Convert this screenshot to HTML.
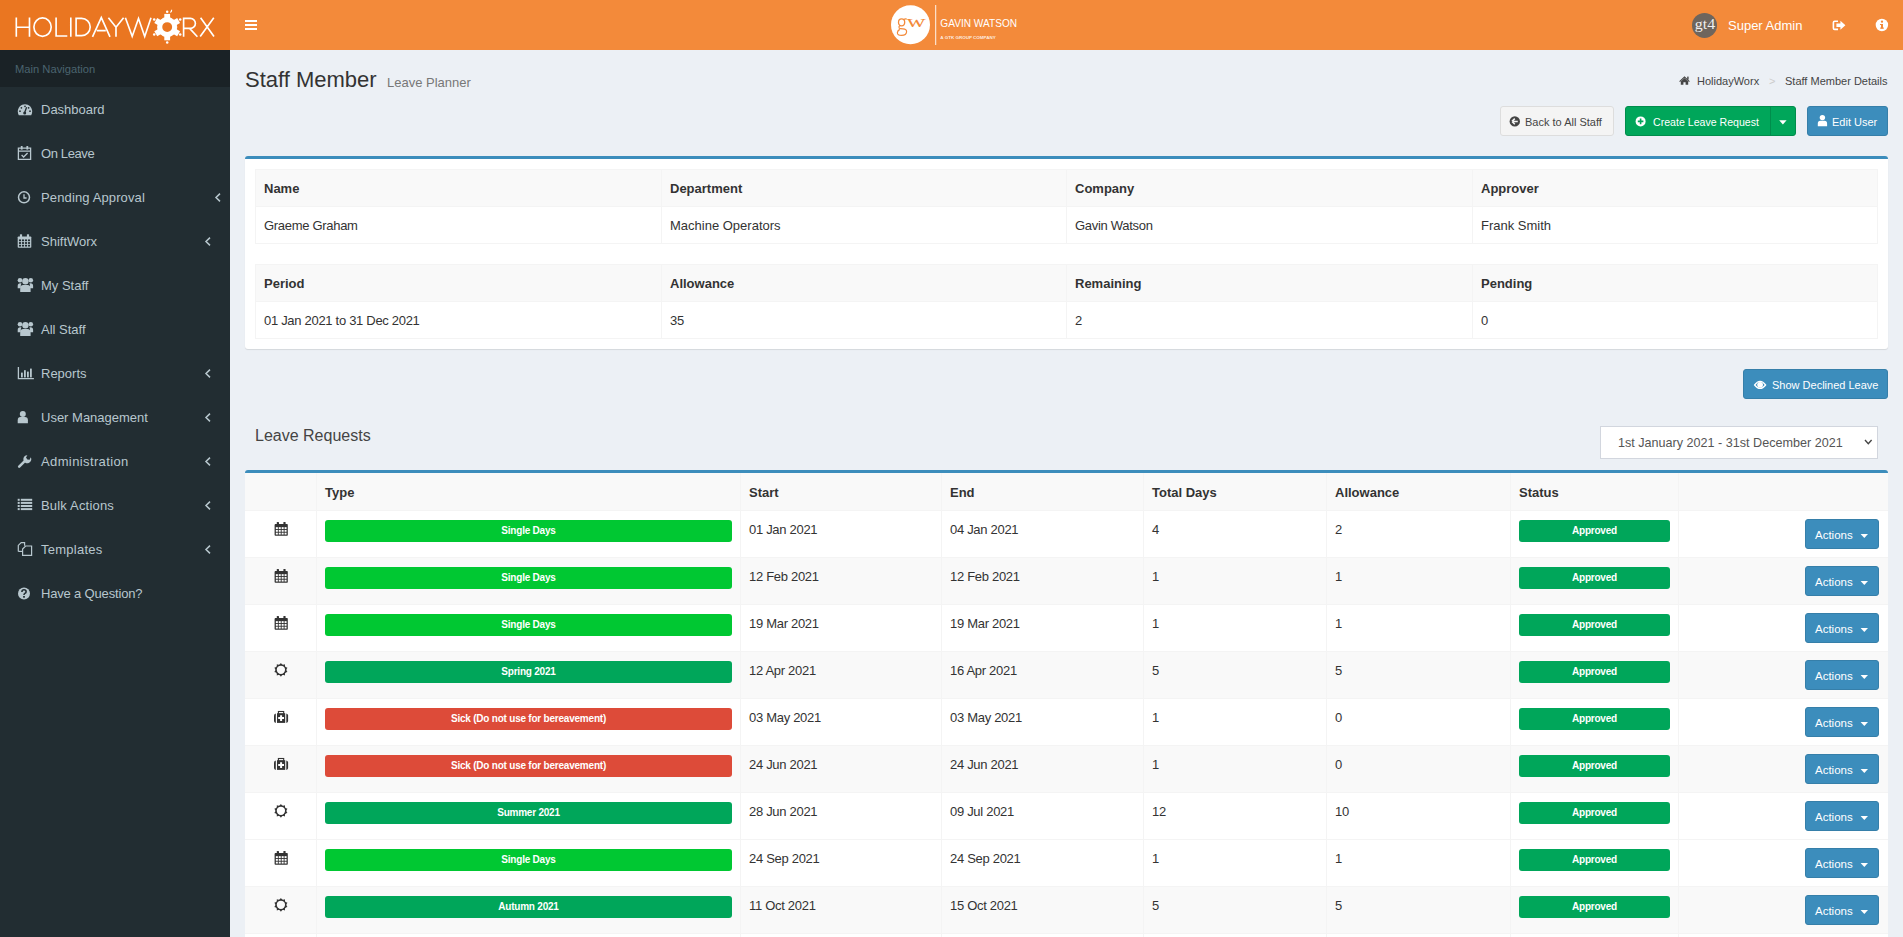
<!DOCTYPE html><html><head><meta charset="utf-8"><style>
*{box-sizing:border-box;margin:0;padding:0}
html,body{width:1903px;height:937px;overflow:hidden;background:#ecf0f5;font-family:"Liberation Sans",sans-serif;color:#333;font-size:13px}
.a{position:absolute}
.t{position:absolute;white-space:nowrap}
svg{display:block;position:absolute;overflow:visible}
</style></head><body>
<div class="a" style="left:0px;top:0px;width:230px;height:50px;background:#ea7621;"></div>
<div class="a" style="left:230px;top:0px;width:1673px;height:50px;background:#f38a3a;"></div>
<div class="a" style="left:245px;top:20px;width:12px;height:2px;background:#fff;"></div>
<div class="a" style="left:245px;top:24px;width:12px;height:2px;background:#fff;"></div>
<div class="a" style="left:245px;top:28px;width:12px;height:2px;background:#fff;"></div>
<div class="a" style="left:0px;top:50px;width:230px;height:887px;background:#222d32;"></div>
<div class="a" style="left:0px;top:50px;width:230px;height:37px;background:#1a2226;"></div>
<div class="t" style="left:15px;top:63px;font-size:11.2px;line-height:12px;color:#4b646f;font-weight:normal;letter-spacing:0px;">Main Navigation</div>
<div class="t" style="left:41px;top:102px;font-size:13px;line-height:15px;color:#b8c7ce;font-weight:normal;letter-spacing:0px;">Dashboard</div>
<div class="t" style="left:41px;top:146px;font-size:13px;line-height:15px;color:#b8c7ce;font-weight:normal;letter-spacing:-0.38px;">On Leave</div>
<div class="t" style="left:41px;top:190px;font-size:13px;line-height:15px;color:#b8c7ce;font-weight:normal;letter-spacing:0.13px;">Pending Approval</div>
<svg style="left:215px;top:193px" width="6" height="9" viewBox="0 0 6 9"><path d="M5 0.6L1 4.5L5 8.4" stroke="#b8c7ce" stroke-width="1.5" fill="none"/></svg>
<div class="t" style="left:41px;top:234px;font-size:13px;line-height:15px;color:#b8c7ce;font-weight:normal;letter-spacing:0px;">ShiftWorx</div>
<svg style="left:205px;top:237px" width="6" height="9" viewBox="0 0 6 9"><path d="M5 0.6L1 4.5L5 8.4" stroke="#b8c7ce" stroke-width="1.5" fill="none"/></svg>
<div class="t" style="left:41px;top:278px;font-size:13px;line-height:15px;color:#b8c7ce;font-weight:normal;letter-spacing:0px;">My Staff</div>
<div class="t" style="left:41px;top:322px;font-size:13px;line-height:15px;color:#b8c7ce;font-weight:normal;letter-spacing:0px;">All Staff</div>
<div class="t" style="left:41px;top:366px;font-size:13px;line-height:15px;color:#b8c7ce;font-weight:normal;letter-spacing:0px;">Reports</div>
<svg style="left:205px;top:369px" width="6" height="9" viewBox="0 0 6 9"><path d="M5 0.6L1 4.5L5 8.4" stroke="#b8c7ce" stroke-width="1.5" fill="none"/></svg>
<div class="t" style="left:41px;top:410px;font-size:13px;line-height:15px;color:#b8c7ce;font-weight:normal;letter-spacing:0px;">User Management</div>
<svg style="left:205px;top:413px" width="6" height="9" viewBox="0 0 6 9"><path d="M5 0.6L1 4.5L5 8.4" stroke="#b8c7ce" stroke-width="1.5" fill="none"/></svg>
<div class="t" style="left:41px;top:454px;font-size:13px;line-height:15px;color:#b8c7ce;font-weight:normal;letter-spacing:0.38px;">Administration</div>
<svg style="left:205px;top:457px" width="6" height="9" viewBox="0 0 6 9"><path d="M5 0.6L1 4.5L5 8.4" stroke="#b8c7ce" stroke-width="1.5" fill="none"/></svg>
<div class="t" style="left:41px;top:498px;font-size:13px;line-height:15px;color:#b8c7ce;font-weight:normal;letter-spacing:0.18px;">Bulk Actions</div>
<svg style="left:205px;top:501px" width="6" height="9" viewBox="0 0 6 9"><path d="M5 0.6L1 4.5L5 8.4" stroke="#b8c7ce" stroke-width="1.5" fill="none"/></svg>
<div class="t" style="left:41px;top:542px;font-size:13px;line-height:15px;color:#b8c7ce;font-weight:normal;letter-spacing:0.25px;">Templates</div>
<svg style="left:205px;top:545px" width="6" height="9" viewBox="0 0 6 9"><path d="M5 0.6L1 4.5L5 8.4" stroke="#b8c7ce" stroke-width="1.5" fill="none"/></svg>
<div class="t" style="left:41px;top:586px;font-size:13px;line-height:15px;color:#b8c7ce;font-weight:normal;letter-spacing:-0.17px;">Have a Question?</div>
<div class="t" style="left:245px;top:67px;font-size:22px;line-height:25px;color:#333;font-weight:normal;letter-spacing:0px;">Staff Member</div>
<div class="t" style="left:387px;top:75px;font-size:13px;line-height:15px;color:#777;font-weight:normal;letter-spacing:0px;">Leave Planner</div>
<div class="t" style="left:1697px;top:75px;font-size:11px;line-height:12px;color:#444;font-weight:normal;letter-spacing:0px;">HolidayWorx</div>
<div class="t" style="left:1769px;top:75px;font-size:11px;line-height:12px;color:#ccc;font-weight:normal;letter-spacing:0px;">&gt;</div>
<div class="t" style="left:1785px;top:75px;font-size:11px;line-height:12px;color:#444;font-weight:normal;letter-spacing:0px;">Staff Member Details</div>
<div class="a" style="left:1500px;top:106px;width:114px;height:30px;background:#f4f4f4;border:1px solid #ddd;border-radius:3px"></div>
<div class="t" style="left:1525px;top:116px;font-size:11px;line-height:12px;color:#444;font-weight:normal;letter-spacing:0px;">Back to All Staff</div>
<div class="a" style="left:1625px;top:106px;width:171px;height:30px;background:#00a65a;border:1px solid #008d4c;border-radius:3px"></div>
<div class="a" style="left:1770px;top:106px;width:1px;height:30px;background:#008d4c;"></div>
<div class="t" style="left:1653px;top:116px;font-size:10.6px;line-height:12px;color:#fff;font-weight:normal;letter-spacing:0px;">Create Leave Request</div>
<div class="a" style="left:1807px;top:106px;width:81px;height:30px;background:#3c8dbc;border:1px solid #367fa9;border-radius:3px"></div>
<div class="t" style="left:1832px;top:116px;font-size:11px;line-height:12px;color:#fff;font-weight:normal;letter-spacing:0px;">Edit User</div>
<div class="a" style="left:245px;top:156px;width:1643px;height:193px;background:#fff;border-top:3px solid #3c8dbc;border-radius:3px;box-shadow:0 1px 1px rgba(0,0,0,0.1)"></div>
<div class="a" style="left:255px;top:169px;width:1623px;height:38px;background:#f9f9f9;"></div>
<div class="a" style="left:255px;top:207px;width:1623px;height:37px;background:#fff;"></div>
<div class="a" style="left:255px;top:169px;width:1623px;height:1px;background:#f4f4f4;"></div>
<div class="a" style="left:255px;top:206px;width:1623px;height:1px;background:#f4f4f4;"></div>
<div class="a" style="left:255px;top:243px;width:1623px;height:1px;background:#f4f4f4;"></div>
<div class="a" style="left:255px;top:169px;width:1px;height:75px;background:#f4f4f4;"></div>
<div class="a" style="left:661px;top:169px;width:1px;height:75px;background:#f4f4f4;"></div>
<div class="a" style="left:1066px;top:169px;width:1px;height:75px;background:#f4f4f4;"></div>
<div class="a" style="left:1472px;top:169px;width:1px;height:75px;background:#f4f4f4;"></div>
<div class="a" style="left:1877px;top:169px;width:1px;height:75px;background:#f4f4f4;"></div>
<div class="t" style="left:264px;top:181px;font-size:13px;line-height:15px;color:#333;font-weight:bold;letter-spacing:0px;">Name</div>
<div class="t" style="left:264px;top:218px;font-size:13px;line-height:15px;color:#333;font-weight:normal;letter-spacing:-0.3px;">Graeme Graham</div>
<div class="t" style="left:670px;top:181px;font-size:13px;line-height:15px;color:#333;font-weight:bold;letter-spacing:0px;">Department</div>
<div class="t" style="left:670px;top:218px;font-size:13px;line-height:15px;color:#333;font-weight:normal;letter-spacing:0.0px;">Machine Operators</div>
<div class="t" style="left:1075px;top:181px;font-size:13px;line-height:15px;color:#333;font-weight:bold;letter-spacing:0px;">Company</div>
<div class="t" style="left:1075px;top:218px;font-size:13px;line-height:15px;color:#333;font-weight:normal;letter-spacing:-0.3px;">Gavin Watson</div>
<div class="t" style="left:1481px;top:181px;font-size:13px;line-height:15px;color:#333;font-weight:bold;letter-spacing:0px;">Approver</div>
<div class="t" style="left:1481px;top:218px;font-size:13px;line-height:15px;color:#333;font-weight:normal;letter-spacing:0.0px;">Frank Smith</div>
<div class="a" style="left:255px;top:264px;width:1623px;height:38px;background:#f9f9f9;"></div>
<div class="a" style="left:255px;top:302px;width:1623px;height:37px;background:#fff;"></div>
<div class="a" style="left:255px;top:264px;width:1623px;height:1px;background:#f4f4f4;"></div>
<div class="a" style="left:255px;top:301px;width:1623px;height:1px;background:#f4f4f4;"></div>
<div class="a" style="left:255px;top:338px;width:1623px;height:1px;background:#f4f4f4;"></div>
<div class="a" style="left:255px;top:264px;width:1px;height:75px;background:#f4f4f4;"></div>
<div class="a" style="left:661px;top:264px;width:1px;height:75px;background:#f4f4f4;"></div>
<div class="a" style="left:1066px;top:264px;width:1px;height:75px;background:#f4f4f4;"></div>
<div class="a" style="left:1472px;top:264px;width:1px;height:75px;background:#f4f4f4;"></div>
<div class="a" style="left:1877px;top:264px;width:1px;height:75px;background:#f4f4f4;"></div>
<div class="t" style="left:264px;top:276px;font-size:13px;line-height:15px;color:#333;font-weight:bold;letter-spacing:0px;">Period</div>
<div class="t" style="left:264px;top:313px;font-size:13px;line-height:15px;color:#333;font-weight:normal;letter-spacing:-0.3px;">01 Jan 2021 to 31 Dec 2021</div>
<div class="t" style="left:670px;top:276px;font-size:13px;line-height:15px;color:#333;font-weight:bold;letter-spacing:0px;">Allowance</div>
<div class="t" style="left:670px;top:313px;font-size:13px;line-height:15px;color:#333;font-weight:normal;letter-spacing:-0.3px;">35</div>
<div class="t" style="left:1075px;top:276px;font-size:13px;line-height:15px;color:#333;font-weight:bold;letter-spacing:0px;">Remaining</div>
<div class="t" style="left:1075px;top:313px;font-size:13px;line-height:15px;color:#333;font-weight:normal;letter-spacing:-0.3px;">2</div>
<div class="t" style="left:1481px;top:276px;font-size:13px;line-height:15px;color:#333;font-weight:bold;letter-spacing:0px;">Pending</div>
<div class="t" style="left:1481px;top:313px;font-size:13px;line-height:15px;color:#333;font-weight:normal;letter-spacing:-0.3px;">0</div>
<div class="a" style="left:1743px;top:369px;width:145px;height:30px;background:#3c8dbc;border:1px solid #367fa9;border-radius:3px"></div>
<div class="t" style="left:1772px;top:379px;font-size:11px;line-height:12px;color:#fff;font-weight:normal;letter-spacing:0px;">Show Declined Leave</div>
<div class="t" style="left:255px;top:427px;font-size:16px;line-height:17px;color:#444;font-weight:normal;letter-spacing:0px;">Leave Requests</div>
<div class="a" style="left:1600px;top:426px;width:278px;height:33px;background:#fff;border:1px solid #d2d6de"></div>
<div class="t" style="left:1618px;top:436px;font-size:12.6px;line-height:14px;color:#555;font-weight:normal;letter-spacing:0px;">1st January 2021 - 31st December 2021</div>
<div class="a" style="left:245px;top:470px;width:1643px;height:467px;background:#fff;border-top:3px solid #3c8dbc;border-radius:3px 3px 0 0"></div>
<div class="a" style="left:245px;top:473px;width:1643px;height:37px;background:#f9f9f9;"></div>
<div class="a" style="left:245px;top:557px;width:1643px;height:47px;background:#f9f9f9;"></div>
<div class="a" style="left:245px;top:651px;width:1643px;height:47px;background:#f9f9f9;"></div>
<div class="a" style="left:245px;top:745px;width:1643px;height:47px;background:#f9f9f9;"></div>
<div class="a" style="left:245px;top:886px;width:1643px;height:47px;background:#f9f9f9;"></div>
<div class="a" style="left:245px;top:510px;width:1643px;height:1px;background:#f4f4f4;"></div>
<div class="a" style="left:245px;top:557px;width:1643px;height:1px;background:#f4f4f4;"></div>
<div class="a" style="left:245px;top:604px;width:1643px;height:1px;background:#f4f4f4;"></div>
<div class="a" style="left:245px;top:651px;width:1643px;height:1px;background:#f4f4f4;"></div>
<div class="a" style="left:245px;top:698px;width:1643px;height:1px;background:#f4f4f4;"></div>
<div class="a" style="left:245px;top:745px;width:1643px;height:1px;background:#f4f4f4;"></div>
<div class="a" style="left:245px;top:792px;width:1643px;height:1px;background:#f4f4f4;"></div>
<div class="a" style="left:245px;top:839px;width:1643px;height:1px;background:#f4f4f4;"></div>
<div class="a" style="left:245px;top:886px;width:1643px;height:1px;background:#f4f4f4;"></div>
<div class="a" style="left:245px;top:933px;width:1643px;height:1px;background:#f4f4f4;"></div>
<div class="a" style="left:316px;top:473px;width:1px;height:464px;background:#f4f4f4;"></div>
<div class="a" style="left:740px;top:473px;width:1px;height:464px;background:#f4f4f4;"></div>
<div class="a" style="left:941px;top:473px;width:1px;height:464px;background:#f4f4f4;"></div>
<div class="a" style="left:1143px;top:473px;width:1px;height:464px;background:#f4f4f4;"></div>
<div class="a" style="left:1326px;top:473px;width:1px;height:464px;background:#f4f4f4;"></div>
<div class="a" style="left:1510px;top:473px;width:1px;height:464px;background:#f4f4f4;"></div>
<div class="a" style="left:1678px;top:473px;width:1px;height:464px;background:#f4f4f4;"></div>
<div class="t" style="left:325px;top:485px;font-size:13px;line-height:15px;color:#333;font-weight:bold;letter-spacing:0px;">Type</div>
<div class="t" style="left:749px;top:485px;font-size:13px;line-height:15px;color:#333;font-weight:bold;letter-spacing:0px;">Start</div>
<div class="t" style="left:950px;top:485px;font-size:13px;line-height:15px;color:#333;font-weight:bold;letter-spacing:0px;">End</div>
<div class="t" style="left:1152px;top:485px;font-size:13px;line-height:15px;color:#333;font-weight:bold;letter-spacing:0px;">Total Days</div>
<div class="t" style="left:1335px;top:485px;font-size:13px;line-height:15px;color:#333;font-weight:bold;letter-spacing:0px;">Allowance</div>
<div class="t" style="left:1519px;top:485px;font-size:13px;line-height:15px;color:#333;font-weight:bold;letter-spacing:0px;">Status</div>
<div class="a" style="left:325px;top:520px;width:407px;height:22px;background:#00c832;border-radius:3px"></div>
<div class="t" style="left:325px;top:520px;width:407px;height:22px;line-height:22px;text-align:center;font-size:10px;letter-spacing:-0.22px;font-weight:bold;color:#fff">Single Days</div>
<div class="t" style="left:749px;top:522px;font-size:13px;line-height:15px;color:#333;font-weight:normal;letter-spacing:-0.3px;">01 Jan 2021</div>
<div class="t" style="left:950px;top:522px;font-size:13px;line-height:15px;color:#333;font-weight:normal;letter-spacing:-0.3px;">04 Jan 2021</div>
<div class="t" style="left:1152px;top:522px;font-size:13px;line-height:15px;color:#333;font-weight:normal;letter-spacing:-0.3px;">4</div>
<div class="t" style="left:1335px;top:522px;font-size:13px;line-height:15px;color:#333;font-weight:normal;letter-spacing:-0.3px;">2</div>
<div class="a" style="left:1519px;top:520px;width:151px;height:22px;background:#00a65a;border-radius:3px"></div>
<div class="t" style="left:1519px;top:520px;width:151px;height:22px;line-height:22px;text-align:center;font-size:10px;letter-spacing:-0.22px;font-weight:bold;color:#fff">Approved</div>
<div class="a" style="left:1805px;top:519px;width:74px;height:30px;background:#3c8dbc;border:1px solid #367fa9;border-radius:3px"></div>
<div class="t" style="left:1815px;top:529px;font-size:11.5px;line-height:12px;color:#fff;font-weight:normal;letter-spacing:0px;">Actions</div>
<div class="a" style="left:325px;top:567px;width:407px;height:22px;background:#00c832;border-radius:3px"></div>
<div class="t" style="left:325px;top:567px;width:407px;height:22px;line-height:22px;text-align:center;font-size:10px;letter-spacing:-0.22px;font-weight:bold;color:#fff">Single Days</div>
<div class="t" style="left:749px;top:569px;font-size:13px;line-height:15px;color:#333;font-weight:normal;letter-spacing:-0.3px;">12 Feb 2021</div>
<div class="t" style="left:950px;top:569px;font-size:13px;line-height:15px;color:#333;font-weight:normal;letter-spacing:-0.3px;">12 Feb 2021</div>
<div class="t" style="left:1152px;top:569px;font-size:13px;line-height:15px;color:#333;font-weight:normal;letter-spacing:-0.3px;">1</div>
<div class="t" style="left:1335px;top:569px;font-size:13px;line-height:15px;color:#333;font-weight:normal;letter-spacing:-0.3px;">1</div>
<div class="a" style="left:1519px;top:567px;width:151px;height:22px;background:#00a65a;border-radius:3px"></div>
<div class="t" style="left:1519px;top:567px;width:151px;height:22px;line-height:22px;text-align:center;font-size:10px;letter-spacing:-0.22px;font-weight:bold;color:#fff">Approved</div>
<div class="a" style="left:1805px;top:566px;width:74px;height:30px;background:#3c8dbc;border:1px solid #367fa9;border-radius:3px"></div>
<div class="t" style="left:1815px;top:576px;font-size:11.5px;line-height:12px;color:#fff;font-weight:normal;letter-spacing:0px;">Actions</div>
<div class="a" style="left:325px;top:614px;width:407px;height:22px;background:#00c832;border-radius:3px"></div>
<div class="t" style="left:325px;top:614px;width:407px;height:22px;line-height:22px;text-align:center;font-size:10px;letter-spacing:-0.22px;font-weight:bold;color:#fff">Single Days</div>
<div class="t" style="left:749px;top:616px;font-size:13px;line-height:15px;color:#333;font-weight:normal;letter-spacing:-0.3px;">19 Mar 2021</div>
<div class="t" style="left:950px;top:616px;font-size:13px;line-height:15px;color:#333;font-weight:normal;letter-spacing:-0.3px;">19 Mar 2021</div>
<div class="t" style="left:1152px;top:616px;font-size:13px;line-height:15px;color:#333;font-weight:normal;letter-spacing:-0.3px;">1</div>
<div class="t" style="left:1335px;top:616px;font-size:13px;line-height:15px;color:#333;font-weight:normal;letter-spacing:-0.3px;">1</div>
<div class="a" style="left:1519px;top:614px;width:151px;height:22px;background:#00a65a;border-radius:3px"></div>
<div class="t" style="left:1519px;top:614px;width:151px;height:22px;line-height:22px;text-align:center;font-size:10px;letter-spacing:-0.22px;font-weight:bold;color:#fff">Approved</div>
<div class="a" style="left:1805px;top:613px;width:74px;height:30px;background:#3c8dbc;border:1px solid #367fa9;border-radius:3px"></div>
<div class="t" style="left:1815px;top:623px;font-size:11.5px;line-height:12px;color:#fff;font-weight:normal;letter-spacing:0px;">Actions</div>
<div class="a" style="left:325px;top:661px;width:407px;height:22px;background:#00a65a;border-radius:3px"></div>
<div class="t" style="left:325px;top:661px;width:407px;height:22px;line-height:22px;text-align:center;font-size:10px;letter-spacing:-0.22px;font-weight:bold;color:#fff">Spring 2021</div>
<div class="t" style="left:749px;top:663px;font-size:13px;line-height:15px;color:#333;font-weight:normal;letter-spacing:-0.3px;">12 Apr 2021</div>
<div class="t" style="left:950px;top:663px;font-size:13px;line-height:15px;color:#333;font-weight:normal;letter-spacing:-0.3px;">16 Apr 2021</div>
<div class="t" style="left:1152px;top:663px;font-size:13px;line-height:15px;color:#333;font-weight:normal;letter-spacing:-0.3px;">5</div>
<div class="t" style="left:1335px;top:663px;font-size:13px;line-height:15px;color:#333;font-weight:normal;letter-spacing:-0.3px;">5</div>
<div class="a" style="left:1519px;top:661px;width:151px;height:22px;background:#00a65a;border-radius:3px"></div>
<div class="t" style="left:1519px;top:661px;width:151px;height:22px;line-height:22px;text-align:center;font-size:10px;letter-spacing:-0.22px;font-weight:bold;color:#fff">Approved</div>
<div class="a" style="left:1805px;top:660px;width:74px;height:30px;background:#3c8dbc;border:1px solid #367fa9;border-radius:3px"></div>
<div class="t" style="left:1815px;top:670px;font-size:11.5px;line-height:12px;color:#fff;font-weight:normal;letter-spacing:0px;">Actions</div>
<div class="a" style="left:325px;top:708px;width:407px;height:22px;background:#dd4b39;border-radius:3px"></div>
<div class="t" style="left:325px;top:708px;width:407px;height:22px;line-height:22px;text-align:center;font-size:10px;letter-spacing:-0.22px;font-weight:bold;color:#fff">Sick (Do not use for bereavement)</div>
<div class="t" style="left:749px;top:710px;font-size:13px;line-height:15px;color:#333;font-weight:normal;letter-spacing:-0.3px;">03 May 2021</div>
<div class="t" style="left:950px;top:710px;font-size:13px;line-height:15px;color:#333;font-weight:normal;letter-spacing:-0.3px;">03 May 2021</div>
<div class="t" style="left:1152px;top:710px;font-size:13px;line-height:15px;color:#333;font-weight:normal;letter-spacing:-0.3px;">1</div>
<div class="t" style="left:1335px;top:710px;font-size:13px;line-height:15px;color:#333;font-weight:normal;letter-spacing:-0.3px;">0</div>
<div class="a" style="left:1519px;top:708px;width:151px;height:22px;background:#00a65a;border-radius:3px"></div>
<div class="t" style="left:1519px;top:708px;width:151px;height:22px;line-height:22px;text-align:center;font-size:10px;letter-spacing:-0.22px;font-weight:bold;color:#fff">Approved</div>
<div class="a" style="left:1805px;top:707px;width:74px;height:30px;background:#3c8dbc;border:1px solid #367fa9;border-radius:3px"></div>
<div class="t" style="left:1815px;top:717px;font-size:11.5px;line-height:12px;color:#fff;font-weight:normal;letter-spacing:0px;">Actions</div>
<div class="a" style="left:325px;top:755px;width:407px;height:22px;background:#dd4b39;border-radius:3px"></div>
<div class="t" style="left:325px;top:755px;width:407px;height:22px;line-height:22px;text-align:center;font-size:10px;letter-spacing:-0.22px;font-weight:bold;color:#fff">Sick (Do not use for bereavement)</div>
<div class="t" style="left:749px;top:757px;font-size:13px;line-height:15px;color:#333;font-weight:normal;letter-spacing:-0.3px;">24 Jun 2021</div>
<div class="t" style="left:950px;top:757px;font-size:13px;line-height:15px;color:#333;font-weight:normal;letter-spacing:-0.3px;">24 Jun 2021</div>
<div class="t" style="left:1152px;top:757px;font-size:13px;line-height:15px;color:#333;font-weight:normal;letter-spacing:-0.3px;">1</div>
<div class="t" style="left:1335px;top:757px;font-size:13px;line-height:15px;color:#333;font-weight:normal;letter-spacing:-0.3px;">0</div>
<div class="a" style="left:1519px;top:755px;width:151px;height:22px;background:#00a65a;border-radius:3px"></div>
<div class="t" style="left:1519px;top:755px;width:151px;height:22px;line-height:22px;text-align:center;font-size:10px;letter-spacing:-0.22px;font-weight:bold;color:#fff">Approved</div>
<div class="a" style="left:1805px;top:754px;width:74px;height:30px;background:#3c8dbc;border:1px solid #367fa9;border-radius:3px"></div>
<div class="t" style="left:1815px;top:764px;font-size:11.5px;line-height:12px;color:#fff;font-weight:normal;letter-spacing:0px;">Actions</div>
<div class="a" style="left:325px;top:802px;width:407px;height:22px;background:#00a65a;border-radius:3px"></div>
<div class="t" style="left:325px;top:802px;width:407px;height:22px;line-height:22px;text-align:center;font-size:10px;letter-spacing:-0.22px;font-weight:bold;color:#fff">Summer 2021</div>
<div class="t" style="left:749px;top:804px;font-size:13px;line-height:15px;color:#333;font-weight:normal;letter-spacing:-0.3px;">28 Jun 2021</div>
<div class="t" style="left:950px;top:804px;font-size:13px;line-height:15px;color:#333;font-weight:normal;letter-spacing:-0.3px;">09 Jul 2021</div>
<div class="t" style="left:1152px;top:804px;font-size:13px;line-height:15px;color:#333;font-weight:normal;letter-spacing:-0.3px;">12</div>
<div class="t" style="left:1335px;top:804px;font-size:13px;line-height:15px;color:#333;font-weight:normal;letter-spacing:-0.3px;">10</div>
<div class="a" style="left:1519px;top:802px;width:151px;height:22px;background:#00a65a;border-radius:3px"></div>
<div class="t" style="left:1519px;top:802px;width:151px;height:22px;line-height:22px;text-align:center;font-size:10px;letter-spacing:-0.22px;font-weight:bold;color:#fff">Approved</div>
<div class="a" style="left:1805px;top:801px;width:74px;height:30px;background:#3c8dbc;border:1px solid #367fa9;border-radius:3px"></div>
<div class="t" style="left:1815px;top:811px;font-size:11.5px;line-height:12px;color:#fff;font-weight:normal;letter-spacing:0px;">Actions</div>
<div class="a" style="left:325px;top:849px;width:407px;height:22px;background:#00c832;border-radius:3px"></div>
<div class="t" style="left:325px;top:849px;width:407px;height:22px;line-height:22px;text-align:center;font-size:10px;letter-spacing:-0.22px;font-weight:bold;color:#fff">Single Days</div>
<div class="t" style="left:749px;top:851px;font-size:13px;line-height:15px;color:#333;font-weight:normal;letter-spacing:-0.3px;">24 Sep 2021</div>
<div class="t" style="left:950px;top:851px;font-size:13px;line-height:15px;color:#333;font-weight:normal;letter-spacing:-0.3px;">24 Sep 2021</div>
<div class="t" style="left:1152px;top:851px;font-size:13px;line-height:15px;color:#333;font-weight:normal;letter-spacing:-0.3px;">1</div>
<div class="t" style="left:1335px;top:851px;font-size:13px;line-height:15px;color:#333;font-weight:normal;letter-spacing:-0.3px;">1</div>
<div class="a" style="left:1519px;top:849px;width:151px;height:22px;background:#00a65a;border-radius:3px"></div>
<div class="t" style="left:1519px;top:849px;width:151px;height:22px;line-height:22px;text-align:center;font-size:10px;letter-spacing:-0.22px;font-weight:bold;color:#fff">Approved</div>
<div class="a" style="left:1805px;top:848px;width:74px;height:30px;background:#3c8dbc;border:1px solid #367fa9;border-radius:3px"></div>
<div class="t" style="left:1815px;top:858px;font-size:11.5px;line-height:12px;color:#fff;font-weight:normal;letter-spacing:0px;">Actions</div>
<div class="a" style="left:325px;top:896px;width:407px;height:22px;background:#00a65a;border-radius:3px"></div>
<div class="t" style="left:325px;top:896px;width:407px;height:22px;line-height:22px;text-align:center;font-size:10px;letter-spacing:-0.22px;font-weight:bold;color:#fff">Autumn 2021</div>
<div class="t" style="left:749px;top:898px;font-size:13px;line-height:15px;color:#333;font-weight:normal;letter-spacing:-0.3px;">11 Oct 2021</div>
<div class="t" style="left:950px;top:898px;font-size:13px;line-height:15px;color:#333;font-weight:normal;letter-spacing:-0.3px;">15 Oct 2021</div>
<div class="t" style="left:1152px;top:898px;font-size:13px;line-height:15px;color:#333;font-weight:normal;letter-spacing:-0.3px;">5</div>
<div class="t" style="left:1335px;top:898px;font-size:13px;line-height:15px;color:#333;font-weight:normal;letter-spacing:-0.3px;">5</div>
<div class="a" style="left:1519px;top:896px;width:151px;height:22px;background:#00a65a;border-radius:3px"></div>
<div class="t" style="left:1519px;top:896px;width:151px;height:22px;line-height:22px;text-align:center;font-size:10px;letter-spacing:-0.22px;font-weight:bold;color:#fff">Approved</div>
<div class="a" style="left:1805px;top:895px;width:74px;height:30px;background:#3c8dbc;border:1px solid #367fa9;border-radius:3px"></div>
<div class="t" style="left:1815px;top:905px;font-size:11.5px;line-height:12px;color:#fff;font-weight:normal;letter-spacing:0px;">Actions</div>
<svg style="left:0px;top:0px" width="230" height="50" viewBox="0 0 230 50"><path d="M16.3 17.6V36.8M29.5 17.6V36.8M16.3 27.2H29.5M56.1 17.6V36M55.3 36H67.3M70.8 17.6V36.8M76.1 18.4V35.6H81.6A8.6 8.6 0 0 0 81.6 18.4ZM92.5 36.8L101.3 17.6L110 36.8M96.8 30.6H105.8M108.4 17.8L116 27.2L123.6 17.8M116 27.2V36.8M125.4 17.8L132.2 36.4L138.5 18.4L144.7 36.4L151 17.8M183.6 36.8V18.4H190.4A5 5 0 0 1 190.4 28.4H183.6M189.6 28.4L197.4 36.8M200.6 17.8L214 36.6M213.8 17.8L200.2 36.6" stroke="#fff" stroke-width="1.65" fill="none"/><ellipse cx="42.55" cy="27.1" rx="8.65" ry="9.2" stroke="#fff" stroke-width="1.65" fill="none"/><circle cx="167.2" cy="27.1" r="7.4" stroke="#fff" stroke-width="4.9" fill="none"/><circle cx="167.2" cy="27.1" r="9.6" fill="none" stroke="#fff" stroke-width="0.8"/><rect x="164.29999999999998" y="13.900000000000002" width="5.8" height="5" transform="rotate(0 167.2 27.1)" fill="#fff"/><rect x="164.29999999999998" y="13.900000000000002" width="5.8" height="5" transform="rotate(60 167.2 27.1)" fill="#fff"/><rect x="164.29999999999998" y="13.900000000000002" width="5.8" height="5" transform="rotate(120 167.2 27.1)" fill="#fff"/><rect x="164.29999999999998" y="13.900000000000002" width="5.8" height="5" transform="rotate(180 167.2 27.1)" fill="#fff"/><rect x="164.29999999999998" y="13.900000000000002" width="5.8" height="5" transform="rotate(240 167.2 27.1)" fill="#fff"/><rect x="164.29999999999998" y="13.900000000000002" width="5.8" height="5" transform="rotate(300 167.2 27.1)" fill="#fff"/><circle cx="167.20" cy="11.80" r="1.25" fill="#fff"/><circle cx="180.19" cy="19.60" r="1.25" fill="#fff"/><circle cx="180.19" cy="34.60" r="1.25" fill="#fff"/><circle cx="167.20" cy="42.40" r="1.25" fill="#fff"/><circle cx="154.21" cy="34.60" r="1.25" fill="#fff"/><circle cx="154.21" cy="19.60" r="1.25" fill="#fff"/><path d="M170.4 12.4q1.4 -1 1.2 -2.6" stroke="#fff" stroke-width="1.2" fill="none"/></svg>
<svg style="left:0px;top:0px" width="1903" height="50" viewBox="0 0 1903 50"><circle cx="910.5" cy="24.8" r="19.5" fill="#fff"/><ellipse cx="901.6" cy="22.3" rx="3.1" ry="3.5" stroke="#f38a3a" stroke-width="1.3" fill="none"/><path d="M903.6 19.6Q904.8 18.6 906.6 18.9" stroke="#f38a3a" stroke-width="1.1" fill="none"/><path d="M900 25.6Q898.4 26.6 899.2 28.2Q899.8 28.9 903 28.9Q906.6 29 906.6 31.8Q906.4 35.4 901.6 35.4Q897.2 35.4 897.4 32.6Q897.6 30.6 899.8 29.4" stroke="#f38a3a" stroke-width="1.2" fill="none"/><text x="906.6" y="26.6" font-family="Liberation Serif" font-size="16" fill="#f38a3a" textLength="19.2" lengthAdjust="spacingAndGlyphs">w</text><rect x="935.2" y="5" width="1" height="40" fill="#fff" fill-opacity="0.9"/><text x="940.3" y="26.8" font-family="Liberation Sans" font-size="11" fill="#fff" textLength="76.8" lengthAdjust="spacingAndGlyphs">GAVIN WATSON</text><text x="940.3" y="39" font-family="Liberation Sans" font-weight="bold" font-size="4.4" fill="#fff" fill-opacity="0.85" textLength="55.5" lengthAdjust="spacingAndGlyphs">A GTK GROUP COMPANY</text><circle cx="1704.5" cy="25.4" r="12.5" fill="#6e655d"/><text x="1694.8" y="29.3" font-family="Liberation Serif" font-size="13.6" fill="#fff" fill-opacity="0.92" textLength="20.4" lengthAdjust="spacingAndGlyphs">gt4</text><path d="M1838 21.2H1834.6Q1833.4 21.2 1833.4 22.4V28.2Q1833.4 29.4 1834.6 29.4H1838" stroke="#fff" stroke-width="1.6" fill="none"/><path d="M1836.4 23.6H1840.4V20.8L1845.4 25.3L1840.4 29.8V27H1836.4Z" fill="#fff"/><circle cx="1881.9" cy="25" r="6.2" fill="#fff"/><rect x="1881" y="24" width="2" height="4.6" fill="#f38a3a"/><rect x="1880" y="24" width="2" height="1" fill="#f38a3a"/><rect x="1880" y="27.6" width="4" height="1" fill="#f38a3a"/><circle cx="1882" cy="21.7" r="1.15" fill="#f38a3a"/></svg>
<div class="t" style="left:1728px;top:18px;font-size:13px;line-height:15px;color:#fff;font-weight:normal;letter-spacing:0px;">Super Admin</div>
<svg style="left:0px;top:0px" width="230" height="937" viewBox="0 0 230 937"><path d="M25 104.2C21 104.2 17.8 107.4 17.8 111.4C17.8 112.8 18.2 114.1 18.8 115.2H31.2C31.8 114.1 32.2 112.8 32.2 111.4C32.2 107.4 29 104.2 25 104.2Z" fill="#b8c7ce"/><circle cx="25" cy="106.3" r="0.85" fill="#222d32"/><circle cx="21.4" cy="107.8" r="0.85" fill="#222d32"/><circle cx="28.6" cy="107.8" r="0.85" fill="#222d32"/><circle cx="20" cy="111.2" r="0.85" fill="#222d32"/><circle cx="30" cy="111.2" r="0.85" fill="#222d32"/><path d="M26.6 107.2L24.8 112.2" stroke="#222d32" stroke-width="1.3"/><circle cx="24.7" cy="113" r="1.5" fill="#222d32"/><path d="M18.4 148.2H30.6V159.3H18.4Z M18.4 151.2H30.6" stroke="#b8c7ce" stroke-width="1.3" fill="none"/><rect x="20.8" y="146" width="1.8" height="3.6" fill="#b8c7ce"/><rect x="26.4" y="146" width="1.8" height="3.6" fill="#b8c7ce"/><path d="M21.6 155L23.6 157L27.6 153" stroke="#b8c7ce" stroke-width="1.3" fill="none"/><circle cx="24" cy="197.3" r="5.5" stroke="#b8c7ce" stroke-width="1.5" fill="none"/><path d="M24 194.2V198H26.6" stroke="#b8c7ce" stroke-width="1.3" fill="none"/><rect x="17.7" y="236.39999999999998" width="13.6" height="11.399999999999999" rx="0.8" fill="#b8c7ce"/><rect x="19.9" y="234.2" width="2.2" height="3.6" rx="0.6" fill="#b8c7ce"/><rect x="26.9" y="234.2" width="2.2" height="3.6" rx="0.6" fill="#b8c7ce"/><rect x="18.95" y="239.45" width="2.10" height="1.77" fill="#222d32"/><rect x="21.95" y="239.45" width="2.10" height="1.77" fill="#222d32"/><rect x="24.95" y="239.45" width="2.10" height="1.77" fill="#222d32"/><rect x="27.95" y="239.45" width="2.10" height="1.77" fill="#222d32"/><rect x="18.95" y="242.12" width="2.10" height="1.77" fill="#222d32"/><rect x="21.95" y="242.12" width="2.10" height="1.77" fill="#222d32"/><rect x="24.95" y="242.12" width="2.10" height="1.77" fill="#222d32"/><rect x="27.95" y="242.12" width="2.10" height="1.77" fill="#222d32"/><rect x="18.95" y="244.78" width="2.10" height="1.77" fill="#222d32"/><rect x="21.95" y="244.78" width="2.10" height="1.77" fill="#222d32"/><rect x="24.95" y="244.78" width="2.10" height="1.77" fill="#222d32"/><rect x="27.95" y="244.78" width="2.10" height="1.77" fill="#222d32"/><circle cx="25.4" cy="281.3" r="3.2" fill="#b8c7ce"/><path d="M20.2 291.9V288.9Q20.2 285.3 23.2 285.09999999999997H27.6Q30.6 285.3 30.6 288.9V291.9Z" fill="#b8c7ce"/><circle cx="20" cy="280.3" r="2.3" fill="#b8c7ce"/><circle cx="30.8" cy="280.3" r="2.3" fill="#b8c7ce"/><path d="M17.7 288.3V286.09999999999997Q17.7 283.3 20.2 283.3H21.4Q20.6 284.5 20.8 288.3Z" fill="#b8c7ce"/><path d="M33.1 288.3V286.09999999999997Q33.1 283.3 30.6 283.3H29.4Q30.2 284.5 30 288.3Z" fill="#b8c7ce"/><circle cx="25.4" cy="325.3" r="3.2" fill="#b8c7ce"/><path d="M20.2 335.9V332.9Q20.2 329.3 23.2 329.09999999999997H27.6Q30.6 329.3 30.6 332.9V335.9Z" fill="#b8c7ce"/><circle cx="20" cy="324.3" r="2.3" fill="#b8c7ce"/><circle cx="30.8" cy="324.3" r="2.3" fill="#b8c7ce"/><path d="M17.7 332.3V330.09999999999997Q17.7 327.3 20.2 327.3H21.4Q20.6 328.5 20.8 332.3Z" fill="#b8c7ce"/><path d="M33.1 332.3V330.09999999999997Q33.1 327.3 30.6 327.3H29.4Q30.2 328.5 30 332.3Z" fill="#b8c7ce"/><path d="M18.4 367V378.6H33.9" stroke="#b8c7ce" stroke-width="1.3" fill="none"/><rect x="21" y="372.6" width="1.8" height="4.8" fill="#b8c7ce"/><rect x="24" y="370.2" width="1.8" height="7.2" fill="#b8c7ce"/><rect x="27" y="371.6" width="1.8" height="5.8" fill="#b8c7ce"/><rect x="30" y="368.6" width="1.8" height="8.8" fill="#b8c7ce"/><circle cx="22.8" cy="413.9" r="3" fill="#b8c7ce"/><path d="M17.7 423.2V420.2Q17.7 417 20.6 417H25Q27.9 417 27.9 420.2V423.2Z" fill="#b8c7ce"/><path d="M19.2 466.6L26 459.8" stroke="#b8c7ce" stroke-width="2.6" stroke-linecap="round"/><path d="M30.8 457.2A4 4 0 1 1 27.4 455.2L26 457.4L27.2 459.6L29.6 459.8Z" fill="#b8c7ce"/><rect x="17.7" y="498.8" width="2" height="2" fill="#b8c7ce"/><rect x="20.8" y="498.8" width="11.4" height="2" fill="#b8c7ce"/><rect x="17.7" y="501.90000000000003" width="2" height="2" fill="#b8c7ce"/><rect x="20.8" y="501.90000000000003" width="11.4" height="2" fill="#b8c7ce"/><rect x="17.7" y="505.0" width="2" height="2" fill="#b8c7ce"/><rect x="20.8" y="505.0" width="11.4" height="2" fill="#b8c7ce"/><rect x="17.7" y="508.1" width="2" height="2" fill="#b8c7ce"/><rect x="20.8" y="508.1" width="11.4" height="2" fill="#b8c7ce"/><path d="M18.3 551.4V545.4L21.2 542.6H24.6V545.8" stroke="#b8c7ce" stroke-width="1.2" fill="none"/><path d="M18.3 551.4H22.4" stroke="#b8c7ce" stroke-width="1.2"/><path d="M22.6 555.4V549L25.6 546H31.6V555.4Z" stroke="#b8c7ce" stroke-width="1.2" fill="none"/><circle cx="24" cy="593.5" r="6" fill="#b8c7ce"/><path d="M21.9 592Q21.9 589.8 24 589.8Q26.1 589.8 26.1 591.7Q26.1 592.8 24.9 593.4Q24 593.9 24 595" stroke="#222d32" stroke-width="1.6" fill="none"/><rect x="23.1" y="596" width="1.8" height="1.7" fill="#222d32"/></svg>
<svg style="left:0px;top:0px" width="1903" height="937" viewBox="0 0 1903 937"><path d="M1679.2 81.2L1684.5 76.2L1689.8 81.2L1689 82L1684.5 77.8L1680 82Z" fill="#444"/><path d="M1680.8 81.4L1684.5 78L1688.2 81.4V84.7H1685.6V82.2H1683.4V84.7H1680.8Z" fill="#444"/><rect x="1687.2" y="76.6" width="1.4" height="3" fill="#444"/><circle cx="1514.8" cy="121.4" r="5.2" fill="#444"/><path d="M1512 121.4L1514.8 118.6M1512 121.4L1514.8 124.2M1512.2 121.4H1517.8" stroke="#f4f4f4" stroke-width="1.5" fill="none"/><circle cx="1640.6" cy="121.4" r="5" fill="#fff"/><path d="M1640.6 118.6V124.2M1637.8 121.4H1643.4" stroke="#00a65a" stroke-width="1.6"/><path d="M1779.2 120.2H1786.6L1782.9 124.4Z" fill="#fff"/><circle cx="1822.4" cy="117.6" r="2.7" fill="#fff"/><path d="M1817.8 126.2V123.6Q1817.8 120.8 1820.4 120.8H1824.5Q1827.1 120.8 1827.1 123.6V126.2Z" fill="#fff"/><path d="M1754.6 385Q1757.2 381.4 1760.1 381.4Q1763 381.4 1765.6 385Q1763 388.4 1760.1 388.4Q1757.2 388.4 1754.6 385Z" stroke="#fff" stroke-width="1.3" fill="none"/><circle cx="1760.1" cy="384.8" r="2.9" fill="#fff"/><path d="M1865 440L1868.3 443.6L1871.6 440" stroke="#444" stroke-width="1.4" fill="none"/><rect x="274.6" y="524.1" width="13.2" height="11.7" rx="0.8" fill="#333"/><rect x="276.8" y="521.9" width="2.2" height="3.6" rx="0.6" fill="#333"/><rect x="283.40000000000003" y="521.9" width="2.2" height="3.6" rx="0.6" fill="#333"/><rect x="275.85" y="527.15" width="2.00" height="1.87" fill="#fff"/><rect x="278.75" y="527.15" width="2.00" height="1.87" fill="#fff"/><rect x="281.65" y="527.15" width="2.00" height="1.87" fill="#fff"/><rect x="284.55" y="527.15" width="2.00" height="1.87" fill="#fff"/><rect x="275.85" y="529.92" width="2.00" height="1.87" fill="#fff"/><rect x="278.75" y="529.92" width="2.00" height="1.87" fill="#fff"/><rect x="281.65" y="529.92" width="2.00" height="1.87" fill="#fff"/><rect x="284.55" y="529.92" width="2.00" height="1.87" fill="#fff"/><rect x="275.85" y="532.68" width="2.00" height="1.87" fill="#fff"/><rect x="278.75" y="532.68" width="2.00" height="1.87" fill="#fff"/><rect x="281.65" y="532.68" width="2.00" height="1.87" fill="#fff"/><rect x="284.55" y="532.68" width="2.00" height="1.87" fill="#fff"/><path d="M1860.6 534.1H1868L1864.3 538.1Z" fill="#fff"/><rect x="274.6" y="571.1" width="13.2" height="11.7" rx="0.8" fill="#333"/><rect x="276.8" y="568.9" width="2.2" height="3.6" rx="0.6" fill="#333"/><rect x="283.40000000000003" y="568.9" width="2.2" height="3.6" rx="0.6" fill="#333"/><rect x="275.85" y="574.15" width="2.00" height="1.87" fill="#f9f9f9"/><rect x="278.75" y="574.15" width="2.00" height="1.87" fill="#f9f9f9"/><rect x="281.65" y="574.15" width="2.00" height="1.87" fill="#f9f9f9"/><rect x="284.55" y="574.15" width="2.00" height="1.87" fill="#f9f9f9"/><rect x="275.85" y="576.92" width="2.00" height="1.87" fill="#f9f9f9"/><rect x="278.75" y="576.92" width="2.00" height="1.87" fill="#f9f9f9"/><rect x="281.65" y="576.92" width="2.00" height="1.87" fill="#f9f9f9"/><rect x="284.55" y="576.92" width="2.00" height="1.87" fill="#f9f9f9"/><rect x="275.85" y="579.68" width="2.00" height="1.87" fill="#f9f9f9"/><rect x="278.75" y="579.68" width="2.00" height="1.87" fill="#f9f9f9"/><rect x="281.65" y="579.68" width="2.00" height="1.87" fill="#f9f9f9"/><rect x="284.55" y="579.68" width="2.00" height="1.87" fill="#f9f9f9"/><path d="M1860.6 581.1H1868L1864.3 585.1Z" fill="#fff"/><rect x="274.6" y="618.1" width="13.2" height="11.7" rx="0.8" fill="#333"/><rect x="276.8" y="615.9" width="2.2" height="3.6" rx="0.6" fill="#333"/><rect x="283.40000000000003" y="615.9" width="2.2" height="3.6" rx="0.6" fill="#333"/><rect x="275.85" y="621.15" width="2.00" height="1.87" fill="#fff"/><rect x="278.75" y="621.15" width="2.00" height="1.87" fill="#fff"/><rect x="281.65" y="621.15" width="2.00" height="1.87" fill="#fff"/><rect x="284.55" y="621.15" width="2.00" height="1.87" fill="#fff"/><rect x="275.85" y="623.92" width="2.00" height="1.87" fill="#fff"/><rect x="278.75" y="623.92" width="2.00" height="1.87" fill="#fff"/><rect x="281.65" y="623.92" width="2.00" height="1.87" fill="#fff"/><rect x="284.55" y="623.92" width="2.00" height="1.87" fill="#fff"/><rect x="275.85" y="626.68" width="2.00" height="1.87" fill="#fff"/><rect x="278.75" y="626.68" width="2.00" height="1.87" fill="#fff"/><rect x="281.65" y="626.68" width="2.00" height="1.87" fill="#fff"/><rect x="284.55" y="626.68" width="2.00" height="1.87" fill="#fff"/><path d="M1860.6 628.1H1868L1864.3 632.1Z" fill="#fff"/><circle cx="280.9" cy="669.8" r="4.85" stroke="#333" stroke-width="1.4" fill="none"/><path d="M279.28 665.07L280.90 662.90L282.52 665.07Z" fill="#333"/><path d="M282.37 665.02L284.96 664.22L284.99 666.93Z" fill="#333"/><path d="M284.90 666.80L287.46 667.67L285.90 669.88Z" fill="#333"/><path d="M285.90 669.72L287.46 671.93L284.90 672.80Z" fill="#333"/><path d="M284.99 672.67L284.96 675.38L282.37 674.58Z" fill="#333"/><path d="M282.52 674.53L280.90 676.70L279.28 674.53Z" fill="#333"/><path d="M279.43 674.58L276.84 675.38L276.81 672.67Z" fill="#333"/><path d="M276.90 672.80L274.34 671.93L275.90 669.72Z" fill="#333"/><path d="M275.90 669.88L274.34 667.67L276.90 666.80Z" fill="#333"/><path d="M276.81 666.93L276.84 664.22L279.43 665.02Z" fill="#333"/><path d="M1860.6 675.1H1868L1864.3 679.1Z" fill="#fff"/><rect x="278.4" y="711.5" width="5.3" height="2.8" stroke="#333" stroke-width="1.1" fill="none"/><rect x="277.0" y="713.1999999999999" width="8.2" height="9.7" fill="#333"/><path d="M275.8 713.4Q274.0 713.8 274.0 715.4V721.0Q274.0 722.5999999999999 275.8 722.9Z" fill="#333"/><path d="M286.3 713.4Q288.1 713.8 288.1 715.4V721.0Q288.1 722.5999999999999 286.3 722.9Z" fill="#333"/><path d="M281.1 715.1999999999999V721.0M278.2 718.0999999999999H284.0" stroke="#fff" stroke-width="2"/><path d="M1860.6 722.1H1868L1864.3 726.1Z" fill="#fff"/><rect x="278.4" y="758.5" width="5.3" height="2.8" stroke="#333" stroke-width="1.1" fill="none"/><rect x="277.0" y="760.1999999999999" width="8.2" height="9.7" fill="#333"/><path d="M275.8 760.4Q274.0 760.8 274.0 762.4V768.0Q274.0 769.5999999999999 275.8 769.9Z" fill="#333"/><path d="M286.3 760.4Q288.1 760.8 288.1 762.4V768.0Q288.1 769.5999999999999 286.3 769.9Z" fill="#333"/><path d="M281.1 762.1999999999999V768.0M278.2 765.0999999999999H284.0" stroke="#fff" stroke-width="2"/><path d="M1860.6 769.1H1868L1864.3 773.1Z" fill="#fff"/><circle cx="280.9" cy="810.8" r="4.85" stroke="#333" stroke-width="1.4" fill="none"/><path d="M279.28 806.07L280.90 803.90L282.52 806.07Z" fill="#333"/><path d="M282.37 806.02L284.96 805.22L284.99 807.93Z" fill="#333"/><path d="M284.90 807.80L287.46 808.67L285.90 810.88Z" fill="#333"/><path d="M285.90 810.72L287.46 812.93L284.90 813.80Z" fill="#333"/><path d="M284.99 813.67L284.96 816.38L282.37 815.58Z" fill="#333"/><path d="M282.52 815.53L280.90 817.70L279.28 815.53Z" fill="#333"/><path d="M279.43 815.58L276.84 816.38L276.81 813.67Z" fill="#333"/><path d="M276.90 813.80L274.34 812.93L275.90 810.72Z" fill="#333"/><path d="M275.90 810.88L274.34 808.67L276.90 807.80Z" fill="#333"/><path d="M276.81 807.93L276.84 805.22L279.43 806.02Z" fill="#333"/><path d="M1860.6 816.1H1868L1864.3 820.1Z" fill="#fff"/><rect x="274.6" y="853.1" width="13.2" height="11.7" rx="0.8" fill="#333"/><rect x="276.8" y="850.9" width="2.2" height="3.6" rx="0.6" fill="#333"/><rect x="283.40000000000003" y="850.9" width="2.2" height="3.6" rx="0.6" fill="#333"/><rect x="275.85" y="856.15" width="2.00" height="1.87" fill="#fff"/><rect x="278.75" y="856.15" width="2.00" height="1.87" fill="#fff"/><rect x="281.65" y="856.15" width="2.00" height="1.87" fill="#fff"/><rect x="284.55" y="856.15" width="2.00" height="1.87" fill="#fff"/><rect x="275.85" y="858.92" width="2.00" height="1.87" fill="#fff"/><rect x="278.75" y="858.92" width="2.00" height="1.87" fill="#fff"/><rect x="281.65" y="858.92" width="2.00" height="1.87" fill="#fff"/><rect x="284.55" y="858.92" width="2.00" height="1.87" fill="#fff"/><rect x="275.85" y="861.68" width="2.00" height="1.87" fill="#fff"/><rect x="278.75" y="861.68" width="2.00" height="1.87" fill="#fff"/><rect x="281.65" y="861.68" width="2.00" height="1.87" fill="#fff"/><rect x="284.55" y="861.68" width="2.00" height="1.87" fill="#fff"/><path d="M1860.6 863.1H1868L1864.3 867.1Z" fill="#fff"/><circle cx="280.9" cy="904.8" r="4.85" stroke="#333" stroke-width="1.4" fill="none"/><path d="M279.28 900.07L280.90 897.90L282.52 900.07Z" fill="#333"/><path d="M282.37 900.02L284.96 899.22L284.99 901.93Z" fill="#333"/><path d="M284.90 901.80L287.46 902.67L285.90 904.88Z" fill="#333"/><path d="M285.90 904.72L287.46 906.93L284.90 907.80Z" fill="#333"/><path d="M284.99 907.67L284.96 910.38L282.37 909.58Z" fill="#333"/><path d="M282.52 909.53L280.90 911.70L279.28 909.53Z" fill="#333"/><path d="M279.43 909.58L276.84 910.38L276.81 907.67Z" fill="#333"/><path d="M276.90 907.80L274.34 906.93L275.90 904.72Z" fill="#333"/><path d="M275.90 904.88L274.34 902.67L276.90 901.80Z" fill="#333"/><path d="M276.81 901.93L276.84 899.22L279.43 900.02Z" fill="#333"/><path d="M1860.6 910.1H1868L1864.3 914.1Z" fill="#fff"/></svg>
</body></html>
